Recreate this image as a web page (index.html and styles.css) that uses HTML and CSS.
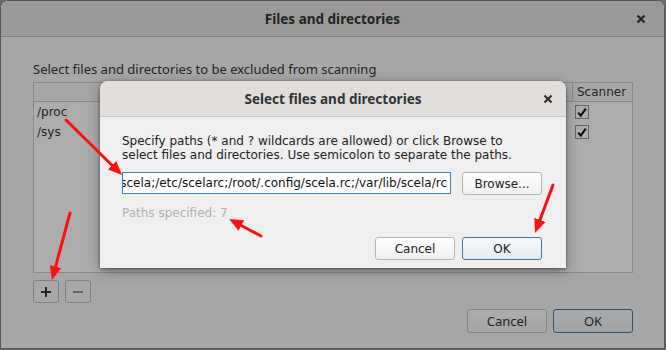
FILE: index.html
```html
<!DOCTYPE html>
<html>
<head>
<meta charset="utf-8">
<link rel="stylesheet" href="styles.css">
</head>
<body>
<div class="window">
  <header class="titlebar">
    <span class="title">Files and directories</span>
    <span class="close"><svg width="10" height="10" viewBox="0 0 10 10"><path d="M1.5 1.5 L8.5 8.5 M8.5 1.5 L1.5 8.5" stroke="#2e3436" stroke-width="2.2" fill="none"/></svg></span>
  </header>
  <main class="content">
    <p class="label">Select files and directories to be excluded from scanning</p>
    <div class="table">
      <div class="thead">
        <div class="cell-path"></div>
        <div class="cell-scan head">Scanner</div>
      </div>
      <div class="row">
        <div class="cell-path">/proc</div>
        <div class="cell-scan"><span class="check"><svg width="12" height="11" viewBox="0 0 12 11"><path d="M2.2 5.6 L4.8 8.6 L9.8 1.6" stroke="#111" stroke-width="2.1" fill="none"/></svg></span></div>
      </div>
      <div class="row">
        <div class="cell-path">/sys</div>
        <div class="cell-scan"><span class="check"><svg width="12" height="11" viewBox="0 0 12 11"><path d="M2.2 5.6 L4.8 8.6 L9.8 1.6" stroke="#111" stroke-width="2.1" fill="none"/></svg></span></div>
      </div>
    </div>
    <div class="tools">
      <button class="tool"><svg width="12" height="12" viewBox="0 0 12 12"><path d="M6 1 V11 M1 6 H11" stroke="#2e3436" stroke-width="2" fill="none"/></svg></button>
      <button class="tool disabled"><svg width="12" height="12" viewBox="0 0 12 12"><path d="M1 6 H11" stroke="#8e9192" stroke-width="2" fill="none"/></svg></button>
    </div>
    <div class="actions">
      <button class="btn">Cancel</button>
      <button class="btn ok">OK</button>
    </div>
  </main>
  <div class="dim"></div>
</div>

<section class="dialog">
  <header class="dlg-titlebar">
    <span class="dlg-title">Select files and directories</span>
    <span class="dlg-close"><svg width="10" height="10" viewBox="0 0 10 10"><path d="M1.5 1.5 L8.5 8.5 M8.5 1.5 L1.5 8.5" stroke="#2e3436" stroke-width="2.2" fill="none"/></svg></span>
  </header>
  <div class="dlg-body">
    <p class="dlg-text">Specify paths (* and ? wildcards are allowed) or click Browse to<br>select files and directories. Use semicolon to separate the paths.</p>
    <div class="input-row">
      <div class="input"><span class="input-text">/proc;/sys;/tmp;/opt/scela;/etc/scelarc;/root/.config/scela.rc;/var/lib/scela/rc</span></div>
      <button class="qbtn">Browse...</button>
    </div>
    <p class="count">Paths specified: 7</p>
    <div class="dlg-actions">
      <button class="qbtn">Cancel</button>
      <button class="qbtn qok">OK</button>
    </div>
  </div>
</section>

<svg class="arrows" width="666" height="350" viewBox="0 0 666 350">
  <defs>
    <marker id="head" markerUnits="userSpaceOnUse" markerWidth="14" markerHeight="12" refX="5" refY="6" orient="auto">
      <path d="M0 0 L14 6 L0 12 Z" fill="#ff1010"/>
    </marker>
  </defs>
  <g stroke="#ff1010" stroke-width="3" fill="none" stroke-linecap="round">
    <line x1="66" y1="120" x2="115.6" y2="168.7" marker-end="url(#head)"/>
    <line x1="70" y1="213" x2="54.3" y2="271.3" marker-end="url(#head)"/>
    <line x1="261" y1="236" x2="237" y2="223.2" marker-end="url(#head)"/>
    <line x1="553" y1="185" x2="538.2" y2="224.6" marker-end="url(#head)"/>
  </g>
</svg>
</body>
</html>
```
FILE: styles.css
```css
* { box-sizing: border-box; }
html, body { margin: 0; padding: 0; }
body {
  width: 666px;
  height: 350px;
  background: #6b6b6b;
  position: relative;
  overflow: hidden;
  font-family: "DejaVu Sans", sans-serif;
  font-size: 12px;
  color: #2e3436;
}
button { font-family: inherit; font-size: inherit; color: inherit; margin: 0; }
p { margin: 0; }

.window {
  position: relative;
  width: 665px;
  height: 349px;
  border: 1px solid #555;
  border-radius: 8px 8px 0 0;
  background: #efefef;
  display: flex;
  flex-direction: column;
  overflow: hidden;
}
.titlebar {
  height: 36px;
  flex: none;
  background: #dedbd8;
  border-bottom: 1px solid #bcb5ad;
  display: flex;
  align-items: center;
  justify-content: center;
  position: relative;
}
.title {
  font-family: "Noto Sans", sans-serif;
  font-weight: 700;
  font-size: 13.5px;
  color: #2e3436;
}
.close {
  position: absolute;
  right: 18px;
  top: 13px;
  display: flex;
}
.content {
  flex: 1;
  padding: 25px 31px 0 32px;
  display: flex;
  flex-direction: column;
}
.label {
  font-family: "Noto Sans", sans-serif;
  font-size: 13px;
  height: 20px;
  line-height: 14px;
}
.table {
  height: 191px;
  border: 1px solid #c4c4c4;
  background: #f8f8f8;
}
.thead {
  display: flex;
  height: 19px;
  border-bottom: 1px solid #c4c4c4;
  background: #efefef;
}
.row { display: flex; height: 20px; align-items: center; }
.cell-path { flex: 1; padding-left: 3px; }
.cell-scan { width: 60px; padding-left: 3px; display: flex; align-items: center; }
.cell-scan.head { border-left: 1px solid #c4c4c4; padding-left: 4px; line-height: 18px; }
.check {
  width: 14px; height: 14px;
  border: 1px solid #8f8f8f;
  background: #f8f8f8;
  display: flex; align-items: center; justify-content: center;
}
.tools { display: flex; gap: 6px; margin-top: 7px; }
.tool {
  width: 26px; height: 23px;
  border: 1px solid #b8b8b8;
  border-radius: 3px;
  background: #f3f3f3;
  display: flex; align-items: center; justify-content: center;
  padding: 0;
}
.actions { display: flex; justify-content: flex-end; gap: 6px; margin-top: 6px; }
.btn {
  width: 80px; height: 24px;
  border: 1px solid #bdbdbd;
  border-radius: 3px;
  background: linear-gradient(#f9f9f9, #ededed);
  padding: 0;
  font-family: "Noto Sans", sans-serif;
  font-size: 13px;
}
.btn.ok { border-color: #4474a8; background: linear-gradient(#f4f6f8, #e6eaee); }
.dim {
  position: absolute;
  inset: 0;
  background: rgba(0,0,0,0.3);
}

.dialog {
  position: absolute;
  left: 100px;
  top: 81px;
  width: 466px;
  height: 187px;
  background: #efefef;
  border-radius: 8px 8px 0 0;
  box-shadow: 0 1px 3px rgba(0,0,0,0.45), 0 3px 14px rgba(0,0,0,0.35);
  display: flex;
  flex-direction: column;
  overflow: hidden;
}
.dlg-titlebar {
  height: 36px;
  flex: none;
  background: #e0dddb;
  border-bottom: 1px solid #c9c5c1;
  display: flex; align-items: center; justify-content: center;
  position: relative;
}
.dlg-title {
  font-family: "Noto Sans", sans-serif;
  font-weight: 700;
  font-size: 13.5px;
  color: #2e3436;
}
.dlg-close { position: absolute; right: 13px; top: 13px; display: flex; }
.dlg-body {
  flex: 1;
  padding: 17px 24px 0 22px;
  display: flex;
  flex-direction: column;
  color: #222;
}
.dlg-text { line-height: 14px; }
.input-row { display: flex; gap: 11px; margin-top: 10px; height: 22px; }
.input {
  width: 329px;
  height: 22px;
  border: 1px solid #3a82c4;
  background: #fff;
  overflow: hidden;
  display: flex;
  justify-content: flex-end;
  align-items: center;
  padding-right: 3px;
  white-space: nowrap;
  color: #111;
}
.input-text { flex: none; }
.qbtn {
  width: 80px; height: 23px;
  border: 1px solid #b5b5b5;
  border-radius: 3px;
  background: linear-gradient(#fdfdfd, #f0f0f0);
  padding: 0;
  color: #222;
}
.count { color: #b0b0b0; margin-top: 12px; line-height: 14px; }
.dlg-actions { display: flex; justify-content: flex-end; gap: 7px; margin-top: 17px; }
.qok { border-color: #3f76a6; background: linear-gradient(#f7f9fb, #e4eaf0); }

.arrows { position: absolute; left: 0; top: 0; pointer-events: none; }
```
